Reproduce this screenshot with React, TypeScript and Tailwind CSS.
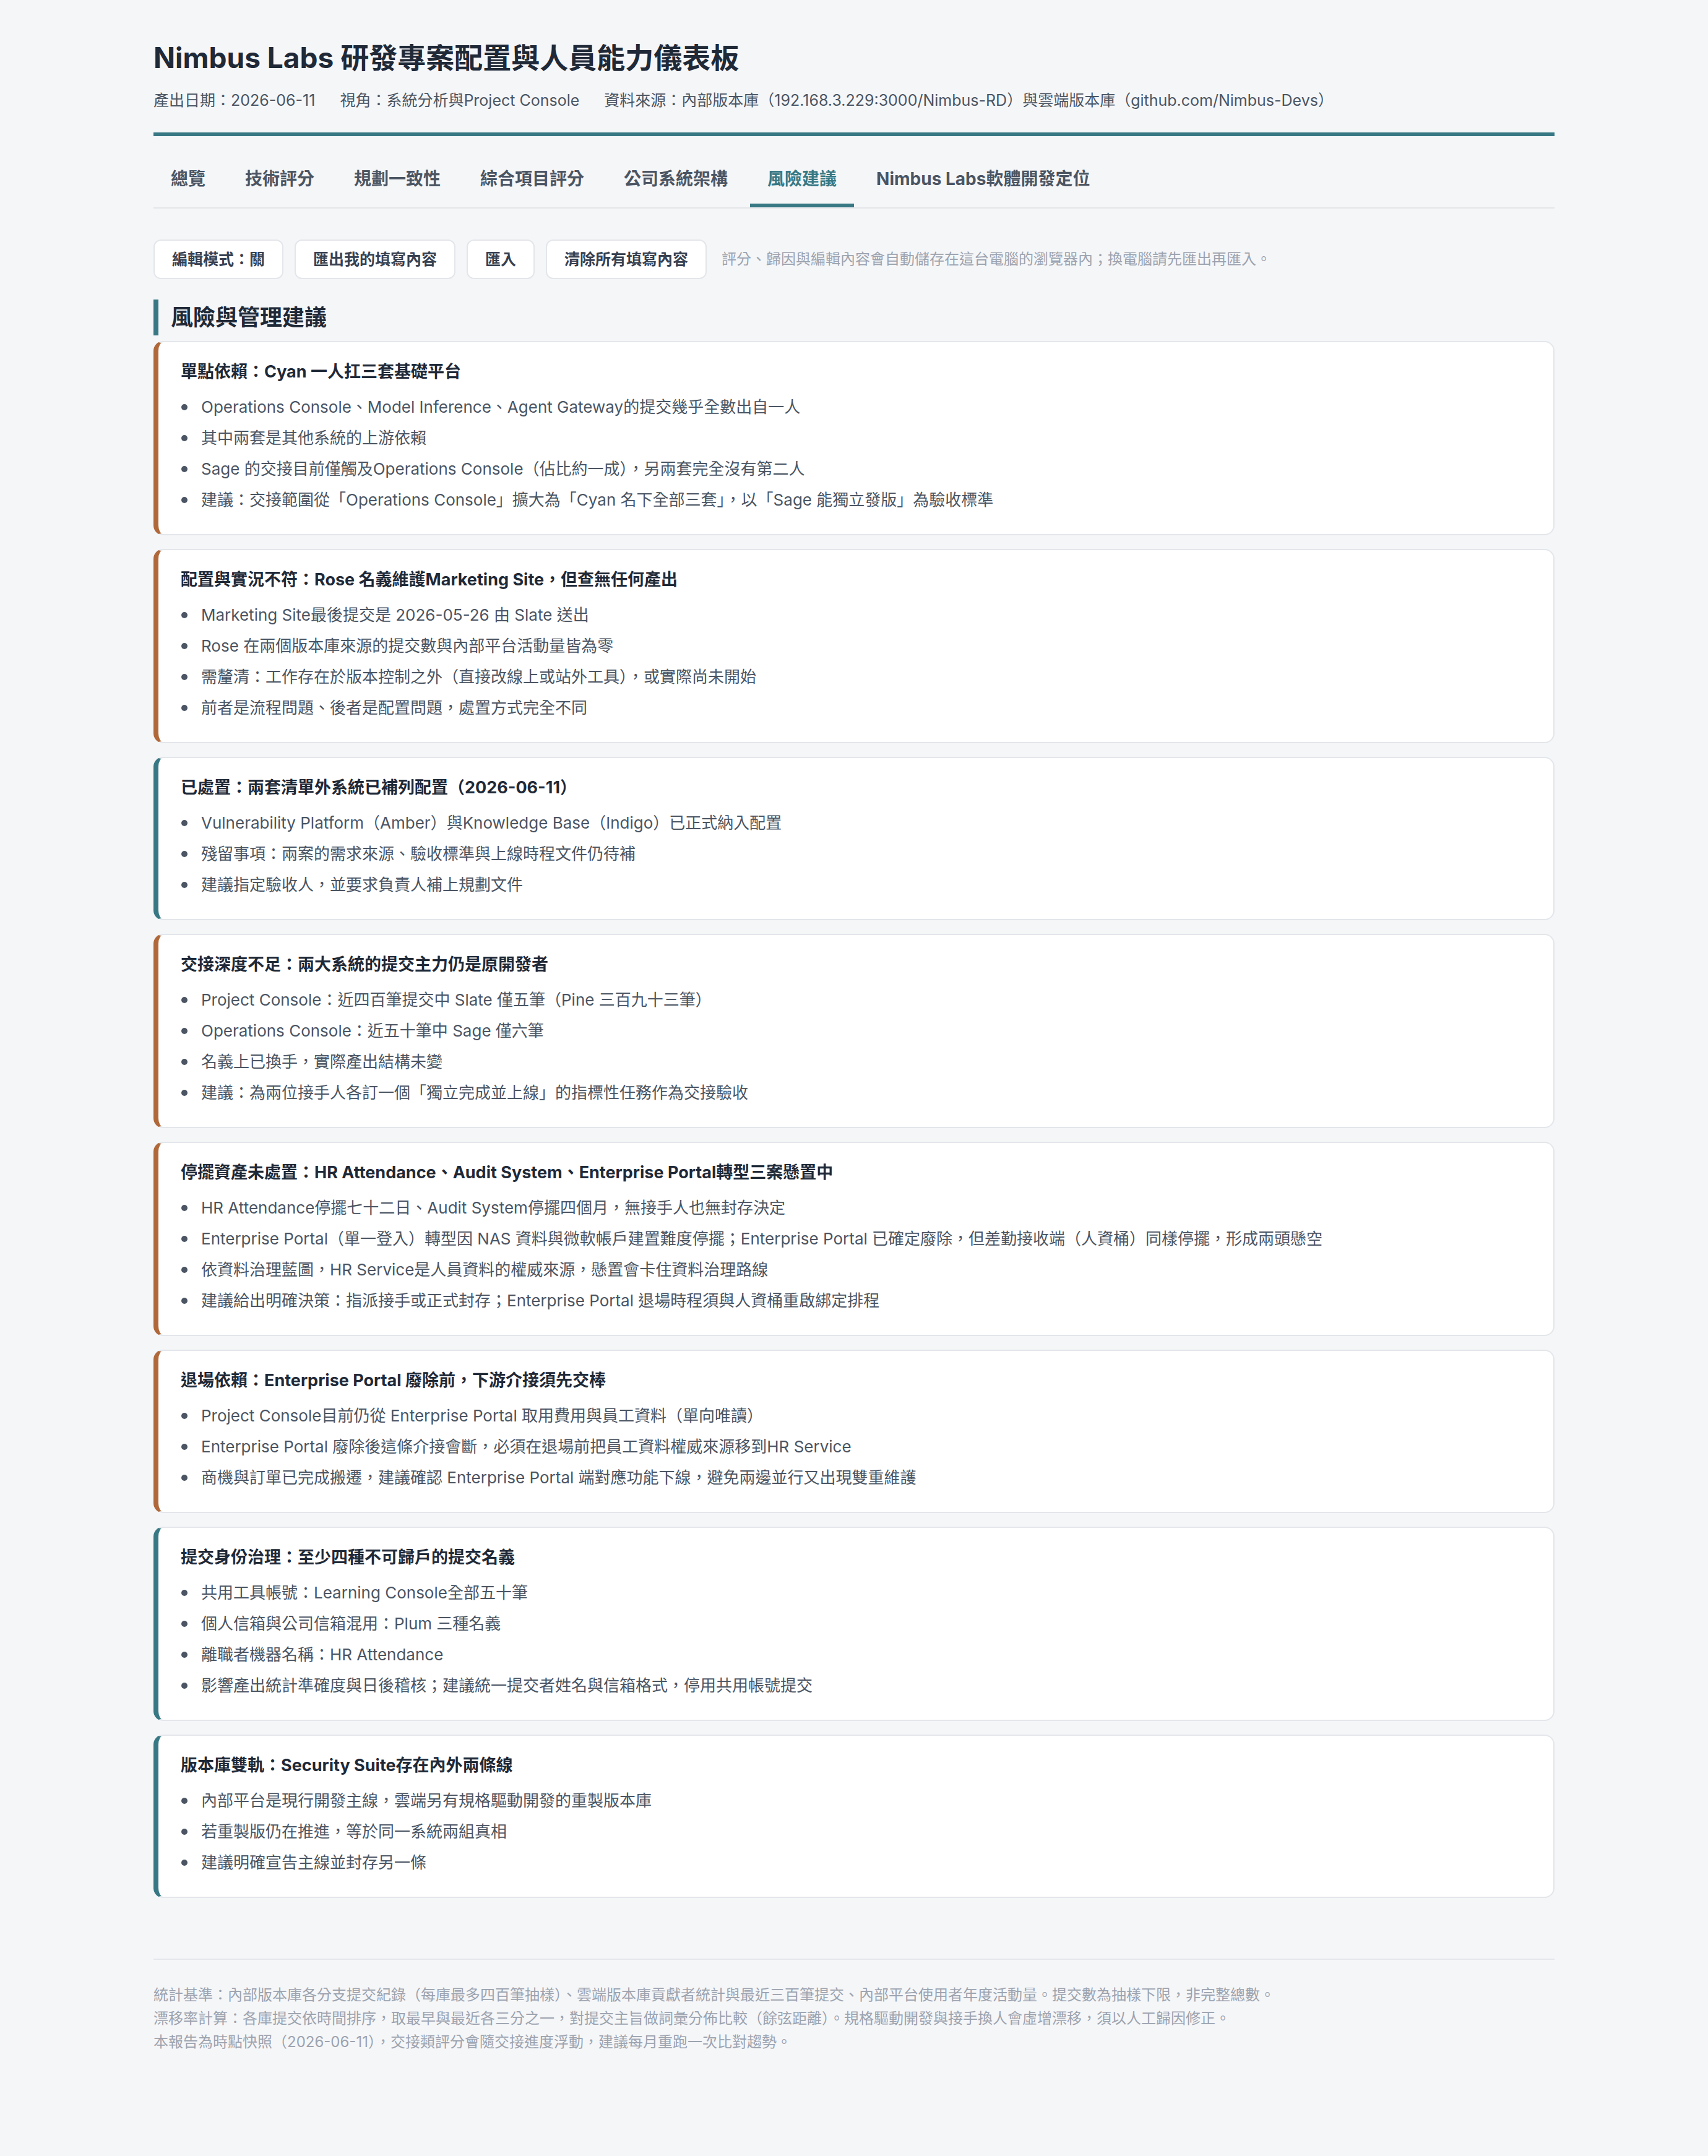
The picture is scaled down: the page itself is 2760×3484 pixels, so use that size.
import React from "react";

type Card = { tone: "orange" | "teal"; title: string; items: string[] };

const cards: Card[] = [
  {
    tone: "orange",
    title: "單點依賴：Cyan 一人扛三套基礎平台",
    items: [
      "Operations Console、Model Inference、Agent Gateway的提交幾乎全數出自一人",
      "其中兩套是其他系統的上游依賴",
      "Sage 的交接目前僅觸及Operations Console（佔比約一成），另兩套完全沒有第二人",
      "建議：交接範圍從「Operations Console」擴大為「Cyan 名下全部三套」，以「Sage 能獨立發版」為驗收標準",
    ],
  },
  {
    tone: "orange",
    title: "配置與實況不符：Rose 名義維護Marketing Site，但查無任何產出",
    items: [
      "Marketing Site最後提交是 2026-05-26 由 Slate 送出",
      "Rose 在兩個版本庫來源的提交數與內部平台活動量皆為零",
      "需釐清：工作存在於版本控制之外（直接改線上或站外工具），或實際尚未開始",
      "前者是流程問題、後者是配置問題，處置方式完全不同",
    ],
  },
  {
    tone: "teal",
    title: "已處置：兩套清單外系統已補列配置（2026-06-11）",
    items: [
      "Vulnerability Platform（Amber）與Knowledge Base（Indigo）已正式納入配置",
      "殘留事項：兩案的需求來源、驗收標準與上線時程文件仍待補",
      "建議指定驗收人，並要求負責人補上規劃文件",
    ],
  },
  {
    tone: "orange",
    title: "交接深度不足：兩大系統的提交主力仍是原開發者",
    items: [
      "Project Console：近四百筆提交中 Slate 僅五筆（Pine 三百九十三筆）",
      "Operations Console：近五十筆中 Sage 僅六筆",
      "名義上已換手，實際產出結構未變",
      "建議：為兩位接手人各訂一個「獨立完成並上線」的指標性任務作為交接驗收",
    ],
  },
  {
    tone: "orange",
    title: "停擺資產未處置：HR Attendance、Audit System、Enterprise Portal轉型三案懸置中",
    items: [
      "HR Attendance停擺七十二日、Audit System停擺四個月，無接手人也無封存決定",
      "Enterprise Portal（單一登入）轉型因 NAS 資料與微軟帳戶建置難度停擺；Enterprise Portal 已確定廢除，但差勤接收端（人資桶）同樣停擺，形成兩頭懸空",
      "依資料治理藍圖，HR Service是人員資料的權威來源，懸置會卡住資料治理路線",
      "建議給出明確決策：指派接手或正式封存；Enterprise Portal 退場時程須與人資桶重啟綁定排程",
    ],
  },
  {
    tone: "orange",
    title: "退場依賴：Enterprise Portal 廢除前，下游介接須先交棒",
    items: [
      "Project Console目前仍從 Enterprise Portal 取用費用與員工資料（單向唯讀）",
      "Enterprise Portal 廢除後這條介接會斷，必須在退場前把員工資料權威來源移到HR Service",
      "商機與訂單已完成搬遷，建議確認 Enterprise Portal 端對應功能下線，避免兩邊並行又出現雙重維護",
    ],
  },
  {
    tone: "teal",
    title: "提交身份治理：至少四種不可歸戶的提交名義",
    items: [
      "共用工具帳號：Learning Console全部五十筆",
      "個人信箱與公司信箱混用：Plum 三種名義",
      "離職者機器名稱：HR Attendance",
      "影響產出統計準確度與日後稽核；建議統一提交者姓名與信箱格式，停用共用帳號提交",
    ],
  },
  {
    tone: "teal",
    title: "版本庫雙軌：Security Suite存在內外兩條線",
    items: [
      "內部平台是現行開發主線，雲端另有規格驅動開發的重製版本庫",
      "若重製版仍在推進，等於同一系統兩組真相",
      "建議明確宣告主線並封存另一條",
    ],
  },
];

const tabs = [
  "總覽",
  "技術評分",
  "規劃一致性",
  "綜合項目評分",
  "公司系統架構",
  "風險建議",
  "Nimbus Labs軟體開發定位",
];

function RiskCard({ card }: { card: Card }) {
  return (
    <div
      className={
        "rounded-[16px] border-2 border-[#e3e6ea] bg-white pl-[36px] pr-[36px] pt-[28px] pb-[33px] border-l-[8px] " +
        (card.tone === "orange" ? "border-l-[#b0683a]" : "border-l-[#377884]")
      }
    >
      <div className="text-[27px] leading-[40px] font-bold text-[#1f2937]">{card.title}</div>
      <ul className="mt-[15px] flex flex-col gap-[6px]">
        {card.items.map((it, i) => (
          <li key={i} className="flex items-start text-[26px] leading-[44px] text-[#4b5563]">
            <span className="flex h-[44px] w-[33px] shrink-0 items-center">
              <span className="ml-[1px] h-[10px] w-[10px] rounded-full bg-[#4b5563]" />
            </span>
            <span>{it}</span>
          </li>
        ))}
      </ul>
    </div>
  );
}

export default function App() {
  return (
    <div className="min-h-screen bg-[#f5f6f8] font-[Inter,'Noto_Sans_CJK_TC',sans-serif]">
      <div className="mx-auto w-[2264px] pt-[63px] pb-[120px]">
        <header className="border-b-[6px] border-[#377884] pb-[34px]">
          <h1 className="text-[46px] leading-[60px] font-bold text-[#1f2937]">
            Nimbus Labs 研發專案配置與人員能力儀表板
          </h1>
          <div className="mt-[21px] flex gap-[40px] text-[25px] leading-[36px] text-[#4b5563]">
            <span>產出日期：2026-06-11</span>
            <span>視角：系統分析與Project Console</span>
            <span>
              資料來源：內部版本庫（192.168.3.229:3000/Nimbus-RD）與雲端版本庫（github.com/Nimbus-Devs）
            </span>
          </div>
        </header>

        <nav className="mt-[29px] flex gap-[8px] border-b-2 border-[#e3e6ea]">
          {tabs.map((t) => {
            const active = t === "風險建議";
            return (
              <div
                key={t}
                className={
                  "px-[28px] pt-[20px] pb-[20px] text-[28px] leading-[40px] font-bold border-b-[6px] " +
                  (active ? "border-[#377884] text-[#377884]" : "border-transparent text-[#4b5563]")
                }
              >
                {t}
              </div>
            );
          })}
        </nav>

        <div className="mt-[50px] flex items-center gap-[18px]">
          {["編輯模式：關", "匯出我的填寫內容", "匯入", "清除所有填寫內容"].map((b) => (
            <button
              key={b}
              className="rounded-[12px] border-2 border-[#e3e6ea] bg-white px-[28px] py-[12px] text-[25px] leading-[36px] font-bold text-[#374151]"
            >
              {b}
            </button>
          ))}
          <span className="ml-[6px] text-[24px] leading-[36px] text-[#9ca3af]">
            評分、歸因與編輯內容會自動儲存在這台電腦的瀏覽器內；換電腦請先匯出再匯入。
          </span>
        </div>

        <h2 className="mt-[33px] border-l-[8px] border-[#377884] pl-[20px] text-[36px] leading-[58px] font-bold text-[#1f2937]">
          風險與管理建議
        </h2>

        <div className="mt-[9px] flex flex-col gap-[22px]">
          {cards.map((c, i) => (
            <RiskCard key={i} card={c} />
          ))}
        </div>

        <footer className="mt-[98px] border-t-2 border-[#e3e6ea] pt-[38px] text-[24px] leading-[38px] text-[#9ca3af]">
          <p>
            統計基準：內部版本庫各分支提交紀錄（每庫最多四百筆抽樣）、雲端版本庫貢獻者統計與最近三百筆提交、內部平台使用者年度活動量。提交數為抽樣下限，非完整總數。
          </p>
          <p>
            漂移率計算：各庫提交依時間排序，取最早與最近各三分之一，對提交主旨做詞彙分佈比較（餘弦距離）。規格驅動開發與接手換人會虛增漂移，須以人工歸因修正。
          </p>
          <p>本報告為時點快照（2026-06-11），交接類評分會隨交接進度浮動，建議每月重跑一次比對趨勢。</p>
        </footer>
      </div>
    </div>
  );
}
